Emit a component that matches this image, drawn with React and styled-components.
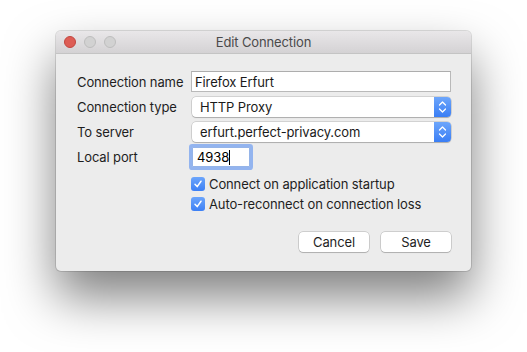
import React from "react";
import styled, { createGlobalStyle } from "styled-components";

const GlobalStyle = createGlobalStyle`
  body {
    margin: 0;
    background: #fff;
    font-family: Inter, "Liberation Sans", Arial, sans-serif;
    letter-spacing: -0.12px;
  }
`;

const EditConnection = () => {
  return (
    <Stage>
      <GlobalStyle />
      <Window>
        <TitleBar>
          <Lights>
            <Light color="#dd5d55" edge="#c2463f" />
            <Light color="#d2d2d2" edge="#bdbdbd" />
            <Light color="#d2d2d2" edge="#bdbdbd" />
          </Lights>
          <Title>Edit Connection</Title>
          <span />
        </TitleBar>
        <Body>
          <Form>
            <Label>Connection name</Label>
            <TextField>Firefox Erfurt</TextField>

            <Label>Connection type</Label>
            <Popup>
              <PopupValue>HTTP Proxy</PopupValue>
              <Stepper>
                <Chevrons />
              </Stepper>
            </Popup>

            <Label>To server</Label>
            <Popup>
              <PopupValue>erfurt.perfect-privacy.com</PopupValue>
              <Stepper>
                <Chevrons />
              </Stepper>
            </Popup>

            <Label>Local port</Label>
            <PortField>
              4938
              <Caret />
            </PortField>
          </Form>

          <Checks>
            <CheckRow>
              <CheckBox>
                <Tick />
              </CheckBox>
              Connect on application startup
            </CheckRow>
            <CheckRow>
              <CheckBox>
                <Tick />
              </CheckBox>
              Auto-reconnect on connection loss
            </CheckRow>
          </Checks>

          <Buttons>
            <Button>Cancel</Button>
            <Button>Save</Button>
          </Buttons>
        </Body>
      </Window>
    </Stage>
  );
};

const Chevrons = () => (
  <svg width="9" height="14" viewBox="0 0 9 14" fill="none">
    <path
      d="M1.5 5 L4.5 2 L7.5 5 M1.5 9 L4.5 12 L7.5 9"
      stroke="#fff"
      strokeWidth="1.3"
      strokeLinecap="round"
      strokeLinejoin="round"
    />
  </svg>
);

const Tick = () => (
  <svg width="10" height="10" viewBox="0 0 10 10" fill="none">
    <path
      d="M2 5.3 L4.2 7.6 L8 2.2"
      stroke="#fff"
      strokeWidth="1.5"
      strokeLinecap="round"
      strokeLinejoin="round"
    />
  </svg>
);

export default EditConnection;

const Stage = styled.div`
  padding: 31px 0 0 56px;
  height: 352px;
  box-sizing: border-box;
`;

const Window = styled.div`
  width: 415px;
  background: #ececec;
  border-radius: 5px;
  overflow: hidden;
  box-shadow: 0 0 0 1px rgba(0, 0, 0, 0.12), 0 26px 50px rgba(0, 0, 0, 0.5);
`;

const TitleBar = styled.div`
  height: 22px;
  display: grid;
  grid-template-columns: 1fr auto 1fr;
  align-items: center;
  background: linear-gradient(#e9e7e9, #d4d2d4);
  border-bottom: 1px solid #c4c4c4;
`;

const Lights = styled.div`
  display: flex;
  gap: 8px;
  padding-left: 8px;
`;

const Light = styled.span`
  width: 12px;
  height: 12px;
  box-sizing: border-box;
  border-radius: 50%;
  background: ${(p) => p.color};
  border: 0.5px solid ${(p) => p.edge};
`;

const Title = styled.div`
  font-size: 13px;
  color: #4a4a4a;
`;

const Body = styled.div`
  padding: 17px 20px 19px 21px;
`;

const Form = styled.div`
  display: grid;
  grid-template-columns: 114px 1fr;
  grid-template-rows: 21px 20px 20px 20px;
  row-gap: 5px;
  align-items: center;
`;

const Label = styled.div`
  font-size: 13px;
  color: #1e1e1e;
`;

const TextField = styled.div`
  height: 21px;
  box-sizing: border-box;
  display: flex;
  align-items: center;
  padding-left: 3px;
  background: #fff;
  border: 1px solid #b9b9b9;
  border-top-color: #adadad;
  font-size: 13px;
  color: #1a1a1a;
`;

const Popup = styled.div`
  height: 20px;
  display: flex;
  align-items: stretch;
  background: #fff;
  border-radius: 4px;
  box-shadow: 0 0 0 0.5px rgba(0, 0, 0, 0.22), 0 1px 1px rgba(0, 0, 0, 0.18);
  margin-left: 1px;
`;

const PopupValue = styled.div`
  flex: 1;
  display: flex;
  align-items: center;
  padding-left: 8px;
  font-size: 13px;
  color: #1a1a1a;
`;

const Stepper = styled.div`
  width: 17px;
  display: flex;
  align-items: center;
  justify-content: center;
  border-radius: 0 4px 4px 0;
  background: linear-gradient(#6da6fb, #3a7ef5);
`;

const PortField = styled.div`
  width: 58px;
  height: 20px;
  box-sizing: border-box;
  margin-left: 1px;
  display: flex;
  align-items: center;
  padding-left: 4px;
  background: #fff;
  border: 1px solid #95b4e8;
  border-radius: 1px;
  box-shadow: 0 0 0 3px rgba(118, 162, 240, 0.75);
  font-size: 13px;
  color: #000;
`;

const Caret = styled.span`
  width: 1px;
  height: 15px;
  background: #000;
`;

const Checks = styled.div`
  display: flex;
  flex-direction: column;
  gap: 6px;
  margin: 10px 0 0 114px;
`;

const CheckRow = styled.div`
  height: 14px;
  display: flex;
  align-items: center;
  gap: 4px;
  font-size: 13px;
  color: #1e1e1e;
`;

const CheckBox = styled.span`
  width: 14px;
  height: 14px;
  border-radius: 3px;
  display: flex;
  align-items: center;
  justify-content: center;
  background: linear-gradient(#6ca5fb, #3d80f5);
`;

const Buttons = styled.div`
  display: flex;
  justify-content: flex-end;
  gap: 12px;
  margin-top: 21px;
`;

const Button = styled.div`
  width: 70px;
  height: 20px;
  display: flex;
  align-items: center;
  justify-content: center;
  background: #fff;
  border-radius: 4px;
  box-shadow: 0 0 0 0.5px rgba(0, 0, 0, 0.25), 0 1px 1px rgba(0, 0, 0, 0.15);
  font-size: 13px;
  color: #1e1e1e;
`;
